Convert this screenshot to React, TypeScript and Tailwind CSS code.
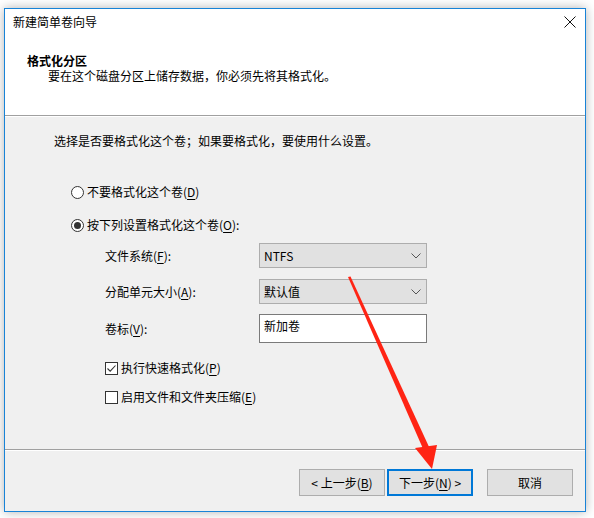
import type { ReactNode } from 'react'

const font = { fontFamily: '"Noto Sans CJK SC", "Noto Sans", sans-serif' }

function Key({ children }: { children: ReactNode }) {
  return <span className="underline underline-offset-2">{children}</span>
}

function Radio({ checked, children }: { checked?: boolean; children: ReactNode }) {
  return (
    <div className="flex items-center h-[16px] leading-[16px]">
      <span className="w-[13px] h-[13px] rounded-full border border-[#333333] bg-white flex items-center justify-center">
        {checked && <span className="w-[7px] h-[7px] rounded-full bg-[#333333]" />}
      </span>
      <span className="ml-[3px]">{children}</span>
    </div>
  )
}

function Checkbox({ checked, children }: { checked?: boolean; children: ReactNode }) {
  return (
    <div className="flex items-center h-[16px] leading-[16px]">
      <span className="w-[13px] h-[13px] border border-[#333333] bg-white flex items-center justify-center">
        {checked && (
          <svg width="11" height="11" viewBox="0 0 11 11">
            <path d="M1.5 5.5 L4.2 8.2 L9.5 2.5" fill="none" stroke="#333333" strokeWidth="1.1" />
          </svg>
        )}
      </span>
      <span className="ml-[3px]">{children}</span>
    </div>
  )
}

function Chevron() {
  return (
    <svg width="10" height="6" viewBox="0 0 10 6" className="mr-[5px]">
      <path d="M0.5 0.5 L5 5 L9.5 0.5" fill="none" stroke="#555555" strokeWidth="1" />
    </svg>
  )
}

function Select({ value }: { value: string }) {
  return (
    <div className="w-[168px] h-[25px] bg-[#e1e1e1] border border-[#adadad] flex items-center justify-between pl-[4px]">
      <span>{value}</span>
      <Chevron />
    </div>
  )
}

function Field({ label, children, className = '' }: { label: ReactNode; children: ReactNode; className?: string }) {
  return (
    <div className={`flex items-center ${className}`}>
      <span className="w-[154px]">{label}</span>
      {children}
    </div>
  )
}

function Button({ children, primary, className = '' }: { children: ReactNode; primary?: boolean; className?: string }) {
  return (
    <div
      className={`w-[86px] h-[27px] bg-[#e1e1e1] flex items-center justify-center ${
        primary ? 'border-2 border-[#0078d7]' : 'border border-[#adadad]'
      } ${className}`}
    >
      {children}
    </div>
  )
}

export default function App() {
  return (
    <div className="relative w-[594px] h-[518px] bg-white overflow-hidden text-[12px] text-black" style={font}>
      <div className="ml-[4px] mt-[8px] w-[582px] h-[504px] border border-[#1883d7] bg-[#f0f0f0] flex flex-col shadow-[0_0_10px_rgba(0,0,0,0.3)]">
        {/* header */}
        <div className="h-[107px] bg-white border-b border-[#a0a0a0] flex flex-col">
          <div className="h-[26px] flex items-center justify-between pl-[8px] pr-[9px]">
            <span>新建简单卷向导</span>
            <svg width="12" height="12" viewBox="0 0 12 12">
              <path d="M0.5 0.5 L11.5 11.5 M11.5 0.5 L0.5 11.5" stroke="#111111" strokeWidth="1" />
            </svg>
          </div>
          <div className="mt-[18px] pl-[22px] leading-[15px] font-bold">格式化分区</div>
          <div className="pl-[43px] leading-[15px]">要在这个磁盘分区上储存数据，你必须先将其格式化。</div>
        </div>
        <div className="h-px bg-white" />

        {/* body */}
        <div className="h-[332px] flex flex-col pt-[16px]">
          <div className="pl-[49px] leading-[16px]">选择是否要格式化这个卷；如果要格式化，要使用什么设置。</div>
          <div className="pl-[66px] mt-[35px] flex flex-col gap-[17px]">
            <Radio>
              不要格式化这个卷(<Key>D</Key>)
            </Radio>
            <Radio checked>
              按下列设置格式化这个卷(<Key>O</Key>):
            </Radio>
          </div>
          <div className="pl-[100px] mt-[10px] flex flex-col">
            <Field label={<>文件系统(<Key>F</Key>):</>}>
              <Select value="NTFS" />
            </Field>
            <Field label={<>分配单元大小(<Key>A</Key>):</>} className="mt-[11px]">
              <Select value="默认值" />
            </Field>
            <Field label={<>卷标(<Key>V</Key>):</>} className="mt-[10px]">
              <div className="w-[168px] h-[29px] bg-white border border-[#7a7a7a] pl-[4px] pt-[3px] leading-[16px]">新加卷</div>
            </Field>
            <div className="mt-[17px] flex flex-col gap-[13px]">
              <Checkbox checked>
                执行快速格式化(<Key>P</Key>)
              </Checkbox>
              <Checkbox>
                启用文件和文件夹压缩(<Key>E</Key>)
              </Checkbox>
            </div>
          </div>
        </div>

        {/* footer */}
        <div className="h-px bg-[#a0a0a0]" />
        <div className="h-px bg-white" />
        <div className="flex-1 flex justify-end items-start pt-[18px] pr-[12px]">
          <Button>
            &lt; 上一步(<Key>B</Key>)
          </Button>
          <Button primary className="ml-[2px]">
            下一步(<Key>N</Key>) &gt;
          </Button>
          <Button className="ml-[14px]">取消</Button>
        </div>
      </div>

      {/* red annotation arrow */}
      <svg className="absolute left-0 top-0 pointer-events-none" width="594" height="518" viewBox="0 0 594 518">
        <polygon points="348,277 350.5,276.5 430,449 424,451" fill="#ff2414" />
        <polygon points="415,448 437,445 432,469" fill="#ff2414" />
      </svg>
    </div>
  )
}
